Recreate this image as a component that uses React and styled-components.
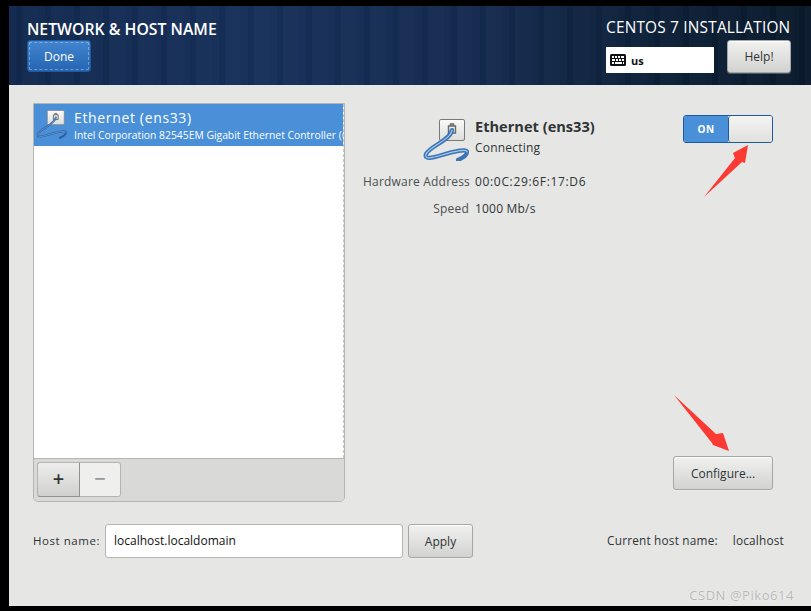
import React from "react";
import styled, { createGlobalStyle } from "styled-components";

const Global = createGlobalStyle`
  html, body { margin: 0; padding: 0; background: #000; }
  * { box-sizing: border-box; }
`;

const Screen = styled.div`
  width: 811px;
  height: 611px;
  padding: 6px 0 5px 9px;
  background: #000;
  display: flex;
  flex-direction: column;
  position: relative;
  overflow: hidden;
  font-family: "Open Sans", "Noto Sans", sans-serif;
  color: #2e3436;
`;

const Header = styled.header`
  height: 79px;
  flex: none;
  padding: 15px 20px 0 18px;
  display: flex;
  justify-content: space-between;
  color: #fff;
  background:
    repeating-linear-gradient(90deg, rgba(255,255,255,0.012) 0 7px, rgba(0,0,0,0.035) 7px 13px, rgba(255,255,255,0.02) 13px 29px),
    linear-gradient(90deg, #12294f 0%, #16305a 30%, #142a4e 60%, #0c2038 80%, #0a1a2c 100%);
`;

const Spot = styled.div`
  display: flex;
  flex-direction: column;
`;

const Title = styled.div`
  font-size: 15.8px;
  line-height: 16px;
  font-weight: 600;
  height: 19px;
  white-space: nowrap;
`;

const Product = styled.div`
  font-size: 15.4px;
  line-height: 14px;
  height: 19px;
  white-space: nowrap;
  letter-spacing: 0.2px;
`;

const Button = styled.button`
  font: inherit;
  font-size: 12px;
  color: #2e3436;
  width: ${(p) => p.$w}px;
  height: ${(p) => p.$h}px;
  padding: 0;
  border: 1px solid #a5a7a4;
  border-radius: 3px;
  background: linear-gradient(#f1f1ef, #d2d3d0);
  box-shadow: inset 0 1px 0 #fff, 0 1px 0 rgba(255,255,255,0.25);
`;

const DoneButton = styled(Button)`
  color: #fff;
  border: 1px solid #1e5a9c;
  background: linear-gradient(#4285cf, #2565b3);
  outline: 1px dashed rgba(190,215,245,0.45);
  outline-offset: -3px;
  box-shadow: none;
`;

const HeaderControls = styled.div`
  display: flex;
  gap: 13px;
  align-items: flex-start;
`;

const KeyboardField = styled.div`
  width: 108px;
  height: 26px;
  margin-top: 7px;
  background: #fff;
  color: #111;
  display: flex;
  align-items: center;
  gap: 5px;
  padding-left: 4px;
  font-size: 11px;
  font-weight: 700;
`;

const Main = styled.main`
  flex: 1;
  background: #e6e6e4;
  padding: 18px 27px 0 24px;
  display: flex;
  flex-direction: column;
  gap: 22px;
`;

const TopRow = styled.div`
  display: flex;
  margin-right: 11px;
  height: 399px;
`;

const DevicePanel = styled.section`
  width: 312px;
  flex: none;
  border: 1px solid #b4b5b3;
  border-radius: 0 0 5px 5px;
  display: flex;
  flex-direction: column;
  overflow: hidden;
`;

const DeviceList = styled.div`
  flex: 1;
  min-height: 0;
  background: #fff;
  border-right: 1px dashed #c4c4c4;
`;

const DeviceRow = styled.div`
  height: 42px;
  background: #4a90d9;
  color: #fff;
  display: flex;
  gap: 6px;
  padding-top: 4px;
  overflow: hidden;
  white-space: nowrap;
`;

const DeviceText = styled.div`
  min-width: 0;
  display: flex;
  flex-direction: column;
  padding-top: 1px;
`;

const DeviceName = styled.div`
  font-size: 14px;
  line-height: 18px;
  letter-spacing: 0.65px;
`;

const DeviceModel = styled.div`
  font-size: 10.35px;
  line-height: 16px;
`;

const Toolbar = styled.div`
  height: 43px;
  flex: none;
  background: #d9d9d7;
  border-top: 1px solid #b4b5b3;
  padding: 3px 0 0 3px;
  display: flex;
`;

const ToolButton = styled.button`
  width: ${(p) => (p.$disabled ? 41 : 43)}px;
  height: 35px;
  padding: 0 0 2px;
  font: inherit;
  font-size: 20px;
  font-weight: 600;
  line-height: 1;
  border: 1px solid #b4b5b3;
  color: ${(p) => (p.$disabled ? "#93989a" : "#2e3436")};
  border-radius: ${(p) => (p.$disabled ? "0 3px 3px 0" : "3px 0 0 3px")};
  border-left-width: ${(p) => (p.$disabled ? 0 : 1)}px;
  background: ${(p) => (p.$disabled ? "#efefee" : "linear-gradient(#ededeb, #d0d1ce)")};
  border-bottom-color: ${(p) => (p.$disabled ? "#b4b5b3" : "#8f918e")};
  border-right-color: ${(p) => (p.$disabled ? "#b4b5b3" : "#8f918e")};
`;

const DetailPane = styled.section`
  flex: 1;
  padding: 12px 0 12px 18px;
  display: flex;
  flex-direction: column;
  justify-content: space-between;
  align-items: flex-end;
`;

const DetailTop = styled.div`
  width: 100%;
  display: flex;
  justify-content: space-between;
  align-items: flex-start;
`;

const InfoGrid = styled.div`
  display: grid;
  grid-template-columns: 106px auto;
  column-gap: 6px;
  font-size: 12px;
  letter-spacing: 0.2px;
`;

const IconCell = styled.div`
  display: flex;
  justify-content: flex-end;
  margin-right: -1px;
  height: 53px;
  padding-top: 1px;
`;

const HeadCell = styled.div`
  padding-top: 1px;
`;

const InfoName = styled.div`
  font-size: 14.6px;
  line-height: 20px;
  font-weight: 700;
  color: #2e3436;
  white-space: nowrap;
  margin-bottom: 3px;
  letter-spacing: 0;
`;

const InfoLabel = styled.div`
  text-align: right;
  white-space: nowrap;
  line-height: 27px;
  color: #4a4f51;
`;

const InfoValue = styled.div`
  white-space: nowrap;
  line-height: 27px;
  letter-spacing: ${(p) => (p.$wide ? 0.66 : 0.2)}px;
`;

const Toggle = styled.div`
  width: 90px;
  height: 28px;
  border: 1px solid #1d5b9c;
  border-radius: 3px;
  display: flex;
  overflow: hidden;
`;

const ToggleOn = styled.div`
  width: 44px;
  background: #4a90d9;
  color: #fff;
  font-size: 10px;
  font-weight: 700;
  letter-spacing: 0.5px;
  display: flex;
  align-items: center;
  justify-content: center;
`;

const ToggleKnob = styled.div`
  flex: 1;
  border-left: 1px solid #1d5b9c;
  border-radius: 3px 0 0 3px;
  background: linear-gradient(#f4f4f3, #e0e0de);
`;

const HostRow = styled.div`
  display: flex;
  align-items: center;
  justify-content: space-between;
`;

const HostForm = styled.div`
  display: flex;
  align-items: center;
`;

const HostLabel = styled.label`
  font-size: 11.5px;
  letter-spacing: 0.55px;
  width: 72px;
  white-space: nowrap;
  padding-bottom: 1px;
`;

const HostInput = styled.div`
  width: 298px;
  height: 34px;
  background: #fff;
  border: 1px solid #b4b5b3;
  border-radius: 3px;
  font-size: 12px;
  line-height: 31px;
  padding-left: 8px;
  color: #111;
  margin-right: 5px;
`;

const CurrentHost = styled.div`
  display: flex;
  gap: 15px;
  font-size: 11.8px;
  letter-spacing: 0.2px;
  white-space: nowrap;
  padding-bottom: 2px;
`;

const Arrow = styled.svg`
  position: absolute;
  left: ${(p) => p.$x}px;
  top: ${(p) => p.$y}px;
`;

const Watermark = styled.div`
  position: absolute;
  right: 17px;
  bottom: 7px;
  font-size: 13px;
  letter-spacing: 0.55px;
  color: rgba(165,165,165,0.8);
  text-shadow: 0 0 1px #fff;
`;

function CableIcon({ width, light }) {
  const id = light ? "plate-light" : "plate";
  return (
    <svg width={width} height={width * 0.9} viewBox="0 0 50 45" style={{ flex: "none" }}>
      <defs>
        <linearGradient id={id} x1="0" y1="0" x2="0" y2="1">
          <stop offset="0" stopColor="#fbfbfa" />
          <stop offset="1" stopColor="#dcdcda" />
        </linearGradient>
      </defs>
      <rect x="19.5" y="3.5" width="25" height="21" rx="1.5" fill={`url(#${id})`} stroke="#77797a" />
      <path d="M28.5 17v-7h7v7z M30.5 10V8h3v2" fill="#eee" stroke="#66696a" strokeWidth="1.4" />
      <path
        d="M32 14C31 24 10 30 6 38C4 44 12 42 22 39C32 36 47 32 47 36C47 40 42 42 38 44"
        fill="none"
        stroke={light ? "#2f5f9c" : "#3a74b6"}
        strokeWidth={light ? 3 : 4.2}
        strokeLinecap="round"
      />
      <path
        d="M32 14C31 24 10 30 6 38C4 44 12 42 22 39C32 36 47 32 47 36"
        fill="none"
        stroke={light ? "#6f9fd8" : "#a9c9ea"}
        strokeWidth="1.2"
        strokeLinecap="round"
      />
    </svg>
  );
}

function KeyboardIcon() {
  return (
    <svg width="16" height="12" viewBox="0 0 16 12">
      <rect width="16" height="12" rx="1.5" fill="#111" />
      <path
        d="M2 2h2v2H2zM5 2h2v2H5zM8 2h2v2H8zM11 2h3v2h-3zM2 5h3v2H2zM6 5h2v2H6zM9 5h2v2H9zM12 5h2v2h-2zM2 8h2v2H2zM5 8h7v2H5zM13 8h1v2h-1z"
        fill="#fff"
      />
    </svg>
  );
}

export default function App() {
  return (
    <Screen>
      <Global />
      <Header>
        <Spot>
          <Title>NETWORK &amp; HOST NAME</Title>
          <DoneButton $w={64} $h={32}>Done</DoneButton>
        </Spot>
        <Spot>
          <Product>CENTOS 7 INSTALLATION</Product>
          <HeaderControls>
            <KeyboardField>
              <KeyboardIcon />
              us
            </KeyboardField>
            <Button $w={64} $h={33}>Help!</Button>
          </HeaderControls>
        </Spot>
      </Header>
      <Main>
        <TopRow>
          <DevicePanel>
            <DeviceList>
              <DeviceRow>
                <CableIcon width={34} light />
                <DeviceText>
                  <DeviceName>Ethernet (ens33)</DeviceName>
                  <DeviceModel>Intel Corporation 82545EM Gigabit Ethernet Controller (Copper)</DeviceModel>
                </DeviceText>
              </DeviceRow>
            </DeviceList>
            <Toolbar>
              <ToolButton>+</ToolButton>
              <ToolButton $disabled>−</ToolButton>
            </Toolbar>
          </DevicePanel>
          <DetailPane>
            <DetailTop>
              <InfoGrid>
                <IconCell>
                  <CableIcon width={50} />
                </IconCell>
                <HeadCell>
                  <InfoName>Ethernet (ens33)</InfoName>
                  <div>Connecting</div>
                </HeadCell>
                <InfoLabel>Hardware Address</InfoLabel>
                <InfoValue $wide>00:0C:29:6F:17:D6</InfoValue>
                <InfoLabel>Speed</InfoLabel>
                <InfoValue>1000 Mb/s</InfoValue>
              </InfoGrid>
              <Toggle>
                <ToggleOn>ON</ToggleOn>
                <ToggleKnob />
              </Toggle>
            </DetailTop>
            <Button $w={100} $h={34}>Configure...</Button>
          </DetailPane>
        </TopRow>
        <HostRow>
          <HostForm>
            <HostLabel>Host name:</HostLabel>
            <HostInput>localhost.localdomain</HostInput>
            <Button $w={65} $h={34}>Apply</Button>
          </HostForm>
          <CurrentHost>
            <span>Current host name:</span>
            <span>localhost</span>
          </CurrentHost>
        </HostRow>
      </Main>
      <Arrow $x={700} $y={140} width="56" height="60" viewBox="0 0 56 60">
        <path d="M4 57L35 18L33 13L48 5L45 23L42 22Z" fill="#fb3a33" />
      </Arrow>
      <Arrow $x={670} $y={392} width="64" height="60" viewBox="0 0 64 60">
        <path d="M4 3L46 42L53 41L59 59L43 53L42 51Z" fill="#fb3a33" />
      </Arrow>
      <Watermark>CSDN @Piko614</Watermark>
    </Screen>
  );
}
